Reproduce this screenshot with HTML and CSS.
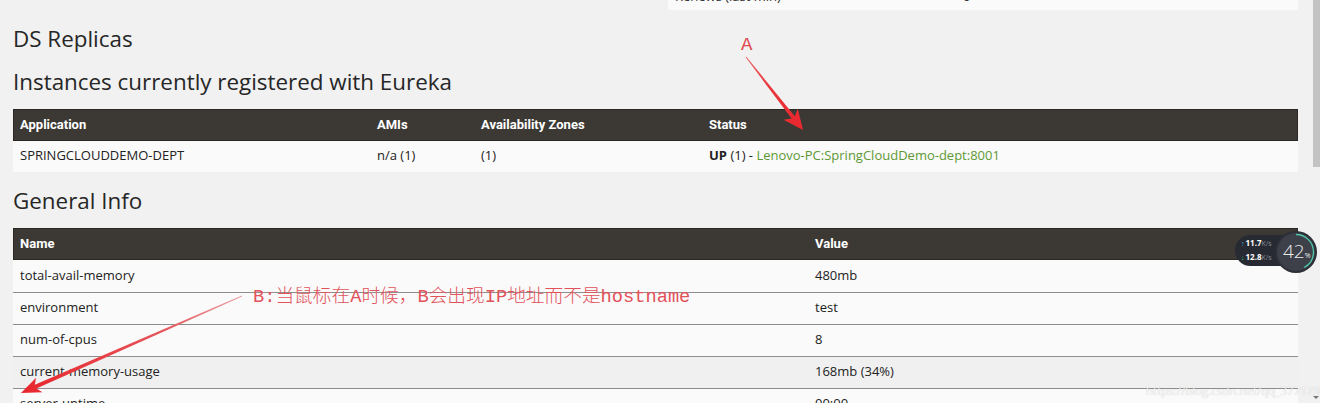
FILE: index.html
```html
<!DOCTYPE html>
<html lang="en">
<head>
<meta charset="utf-8">
<title>Eureka</title>
<link rel="stylesheet" href="styles.css">
</head>
<body>
<div class="page">
  <div class="content">
    <div class="top-row">
      <div class="cell">Renews (last min)</div>
      <div class="cell">0</div>
    </div>

    <h2 class="heading h-ds">DS Replicas</h2>
    <h2 class="heading h-inst">Instances currently registered with Eureka</h2>

    <div class="table t-apps">
      <div class="thead">
        <div>Application</div>
        <div>AMIs</div>
        <div>Availability Zones</div>
        <div>Status</div>
      </div>
      <div class="row">
        <div>SPRINGCLOUDDEMO-DEPT</div>
        <div>n/a (1)</div>
        <div>(1)</div>
        <div><b>UP</b> (1) - <a class="link">Lenovo-PC:SpringCloudDemo-dept:8001</a></div>
      </div>
    </div>

    <h2 class="heading h-gen">General Info</h2>

    <div class="table t-info">
      <div class="thead">
        <div>Name</div>
        <div>Value</div>
      </div>
      <div class="row"><div>total-avail-memory</div><div>480mb</div></div>
      <div class="row"><div>environment</div><div>test</div></div>
      <div class="row"><div>num-of-cpus</div><div>8</div></div>
      <div class="row row-hover"><div>current-memory-usage</div><div>168mb (34%)</div></div>
      <div class="row"><div>server-uptime</div><div>00:00</div></div>
    </div>
  </div>

  <div class="scrollbar">
    <div class="thumb"></div>
    <div class="sb-spacer"></div>
    <div class="sb-arrow"></div>
  </div>

  <svg class="arrows" width="1320" height="403" viewBox="0 0 1320 403">
    <defs>
      <linearGradient id="gb" gradientUnits="userSpaceOnUse" x1="242" y1="296" x2="21" y2="393">
        <stop offset="0" stop-color="#eaa4a6"/>
        <stop offset="0.35" stop-color="#e6565b"/>
        <stop offset="1" stop-color="#e8262d"/>
      </linearGradient>
      <linearGradient id="ga" gradientUnits="userSpaceOnUse" x1="746" y1="57" x2="803" y2="130">
        <stop offset="0" stop-color="#e86a6f"/>
        <stop offset="0.4" stop-color="#e8383e"/>
        <stop offset="1" stop-color="#ea262d"/>
      </linearGradient>
    </defs>
    <polygon fill="url(#ga)" points="745.6,57.3 791.6,118.6 783.6,119.7 803,130 797.8,108.7 794.8,116.2 746.4,56.7"/>
    <polygon fill="url(#gb)" points="241.8,295.6 34.8,384.8 36.1,377.7 21,393 42.5,392.3 36.4,388.4 242.2,296.4"/>
  </svg>

  <div class="anno anno-a">A</div>
  <div class="anno anno-b">B:当鼠标在A时候，B会出现IP地址而不是hostname</div>

  <div class="netmon">
    <div class="pill">
      <div class="rate"><span class="ar ar-up">↑</span><b>11.7</b><span class="unit">K/s</span></div>
      <div class="rate"><span class="ar ar-down">↓</span><b>12.8</b><span class="unit">K/s</span></div>
    </div>
    <div class="dial">
      <svg width="44" height="44" viewBox="0 0 44 44">
        <circle cx="22" cy="22" r="21" fill="#2c2f37"/>
        <circle cx="22" cy="22" r="19" fill="#3d4049"/>
        <circle cx="22" cy="22" r="17.5" fill="none" stroke="#4fc3a6" stroke-width="1.4" stroke-dasharray="46.2 200" transform="rotate(-90 22 22)"/>
      </svg>
      <span class="pct">42<small>%</small></span>
    </div>
  </div>

  <div class="watermark">https://blog.csdn.net/qq_37717369</div>
</div>
</body>
</html>
```

FILE: styles.css
```css
html, body {
  margin: 0;
  padding: 0;
}

body {
  background: #f1f1f1;
  font-family: "Open Sans", "Noto Sans", sans-serif;
  color: #222;
}

.page {
  position: relative;
  display: flex;
  width: 1320px;
  height: 403px;
  overflow: hidden;
}

.content {
  flex: none;
  width: 1311px;
  padding: 0 13px;
  box-sizing: border-box;
}

/* partial row of the table above (scrolled out of view) */
.top-row {
  margin-left: 655px;
  height: 10px;
  overflow: hidden;
  background: #fafafa;
  display: grid;
  grid-template-columns: 288px 1fr;
  font-size: 13px;
  line-height: 20px;
  color: #333;
}

.top-row .cell {
  padding-left: 7px;
  margin-top: -14px;
}

.heading {
  margin: 0;
  font-weight: 400;
  font-size: 22.4px;
  line-height: 28px;
  color: #262626;
}

.h-ds { margin-top: 15px; }
.h-inst { margin-top: 15px; }
.t-apps { margin-top: 13px; }
.h-gen { margin-top: 15px; }
.t-info { margin-top: 13px; }

.thead {
  display: grid;
  height: 32px;
  box-sizing: border-box;
  padding-bottom: 2px;
  align-items: center;
  background: #3c3935;
  box-shadow: inset 0 0 0 1px #2a2724;
  color: #fff;
  font-family: Roboto, "Open Sans", sans-serif;
  font-weight: 700;
  font-size: 13px;
}

.row {
  display: grid;
  height: 32px;
  box-sizing: border-box;
  padding-bottom: 3px;
  align-items: center;
  background: #fafafa;
  font-size: 13px;
  color: #222;
}

.thead > div,
.row > div {
  padding-left: 7px;
  white-space: nowrap;
}

.t-apps .thead,
.t-apps .row {
  grid-template-columns: 357px 104px 228px 1fr;
}

.t-apps .row {
  height: 31px;
}

.t-info .thead,
.t-info .row {
  grid-template-columns: 795px 1fr;
}

.t-info .row + .row {
  border-top: 1px solid #8e8e8e;
}

.t-info .row-hover {
  background: #f0f0f0;
}

.row b {
  font-weight: 700;
}

.link {
  color: #5e9935;
  text-decoration: none;
}

/* fake scrollbar */
.scrollbar {
  flex: none;
  width: 9px;
  display: flex;
  flex-direction: column;
  align-items: center;
  background: #f1f1f1;
}

.thumb {
  width: 7px;
  height: 167px;
  margin-left: 1px;
  background: #c3c3c3;
}

.sb-spacer {
  flex: 1;
}

.sb-arrow {
  width: 0;
  height: 0;
  margin-bottom: 4px;
  border-left: 3px solid transparent;
  border-right: 3px solid transparent;
  border-top: 3px solid #777;
}

/* annotations drawn on top of the screenshot */
.arrows {
  position: absolute;
  left: 0;
  top: 0;
  pointer-events: none;
}

.anno {
  position: absolute;
  white-space: nowrap;
  font-family: "Liberation Mono", "Noto Sans CJK SC", monospace;
  line-height: 20px;
}

.anno-a {
  left: 741px;
  top: 35px;
  font-size: 19px;
  color: #e0464e;
}

.anno-b {
  left: 253px;
  top: 287px;
  font-size: 18.7px;
  font-weight: 300;
  color: #e2525a;
}

/* network monitor widget */
.netmon {
  position: absolute;
  left: 1233px;
  top: 229px;
  width: 87px;
  height: 44px;
}

.pill {
  position: absolute;
  left: 2px;
  top: 6px;
  width: 60px;
  height: 31px;
  box-sizing: border-box;
  padding-left: 6px;
  border-radius: 16px;
  background: #272a33;
  display: flex;
  flex-direction: column;
  justify-content: center;
  gap: 3px;
  font-family: "Open Sans", sans-serif;
  font-size: 8px;
  line-height: 10px;
  color: #fff;
}

.rate b {
  font-weight: 700;
}

.ar {
  font-size: 7px;
  margin-right: 1px;
}

.ar-up { color: #44b6e0; }
.ar-down { color: #4cc27a; }

.unit {
  color: #8a8f9a;
  font-size: 7px;
}

.dial {
  position: absolute;
  left: 41px;
  top: 1px;
  width: 44px;
  height: 44px;
}

.dial svg {
  display: block;
}

.pct {
  position: absolute;
  left: 9px;
  top: 11px;
  font-family: "Open Sans", sans-serif;
  font-weight: 300;
  font-size: 19px;
  line-height: 20px;
  color: #ececec;
}

.pct small {
  font-size: 7px;
  font-weight: 400;
}

.watermark {
  position: absolute;
  left: 1146px;
  top: 384px;
  font-size: 11.5px;
  line-height: 14px;
  color: rgba(255, 255, 255, 0.9);
  text-shadow: 0 0 1px rgba(110, 110, 110, 0.45);
  white-space: nowrap;
}
```
